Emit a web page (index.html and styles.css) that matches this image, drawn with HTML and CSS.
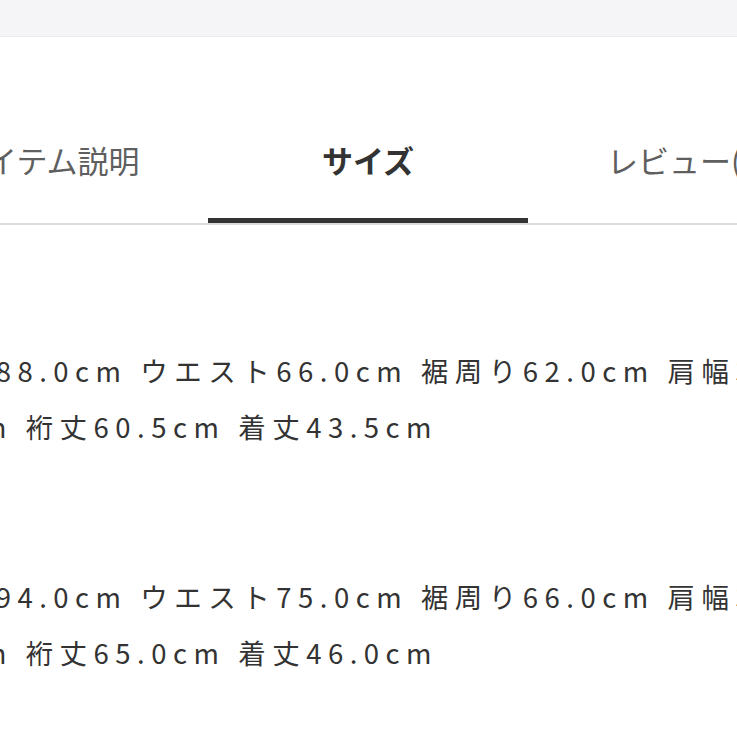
FILE: index.html
```html
<!DOCTYPE html>
<html lang="ja">
<head>
  <meta charset="UTF-8">
  <title>サイズ</title>
  <link rel="stylesheet" href="styles.css">
</head>
<body>
  <div class="topbar"></div>

  <nav class="tabs">
    <div class="tab">アイテム説明</div>
    <div class="tab active">サイズ</div>
    <div class="tab">レビュー(0)</div>
  </nav>

  <div class="size-info">
    <div class="size-block">
      <p class="size-name">Sサイズ</p>
      <p class="size-text">実寸 バスト88.0cm ウエスト66.0cm 裾周り62.0cm 肩幅36.0cm<br>袖丈52.0cm 裄丈60.5cm 着丈43.5cm</p>
    </div>
    <div class="size-block">
      <p class="size-name">Mサイズ</p>
      <p class="size-text">実寸 バスト94.0cm ウエスト75.0cm 裾周り66.0cm 肩幅38.0cm<br>袖丈54.0cm 裄丈65.0cm 着丈46.0cm</p>
    </div>
  </div>
</body>
</html>
```

FILE: styles.css
```css
body {
  margin: 0;
  background: #fff;
  font-family: "Noto Sans CJK JP", "Noto Sans", sans-serif;
  color: #333;
  overflow: hidden;
}

.topbar {
  height: 36px;
  background: #f5f5f7;
  border-bottom: 1px solid #ececee;
}

/* tabs */
.tabs {
  display: flex;
  margin-left: -112px;
  padding-top: 103px;
  border-bottom: 2px solid #dcdcdc;
}

.tab {
  flex: 0 0 320px;
  text-align: center;
  font-size: 31px;
  line-height: 40px;
  color: #5f5f5f;
  padding-bottom: 38px;
  border-bottom: 5px solid transparent;
  white-space: nowrap;
}

.tab.active {
  color: #333;
  font-weight: bold;
  border-bottom-color: #333;
}

/* size text */
.size-info {
  padding-top: 61px;
  margin-left: -187px;
}

.size-block {
  margin-bottom: 58px;
}

.size-block p {
  margin: 0;
  font-size: 27.5px;
  line-height: 56px;
  letter-spacing: 6.5px;
  white-space: nowrap;
}
```
